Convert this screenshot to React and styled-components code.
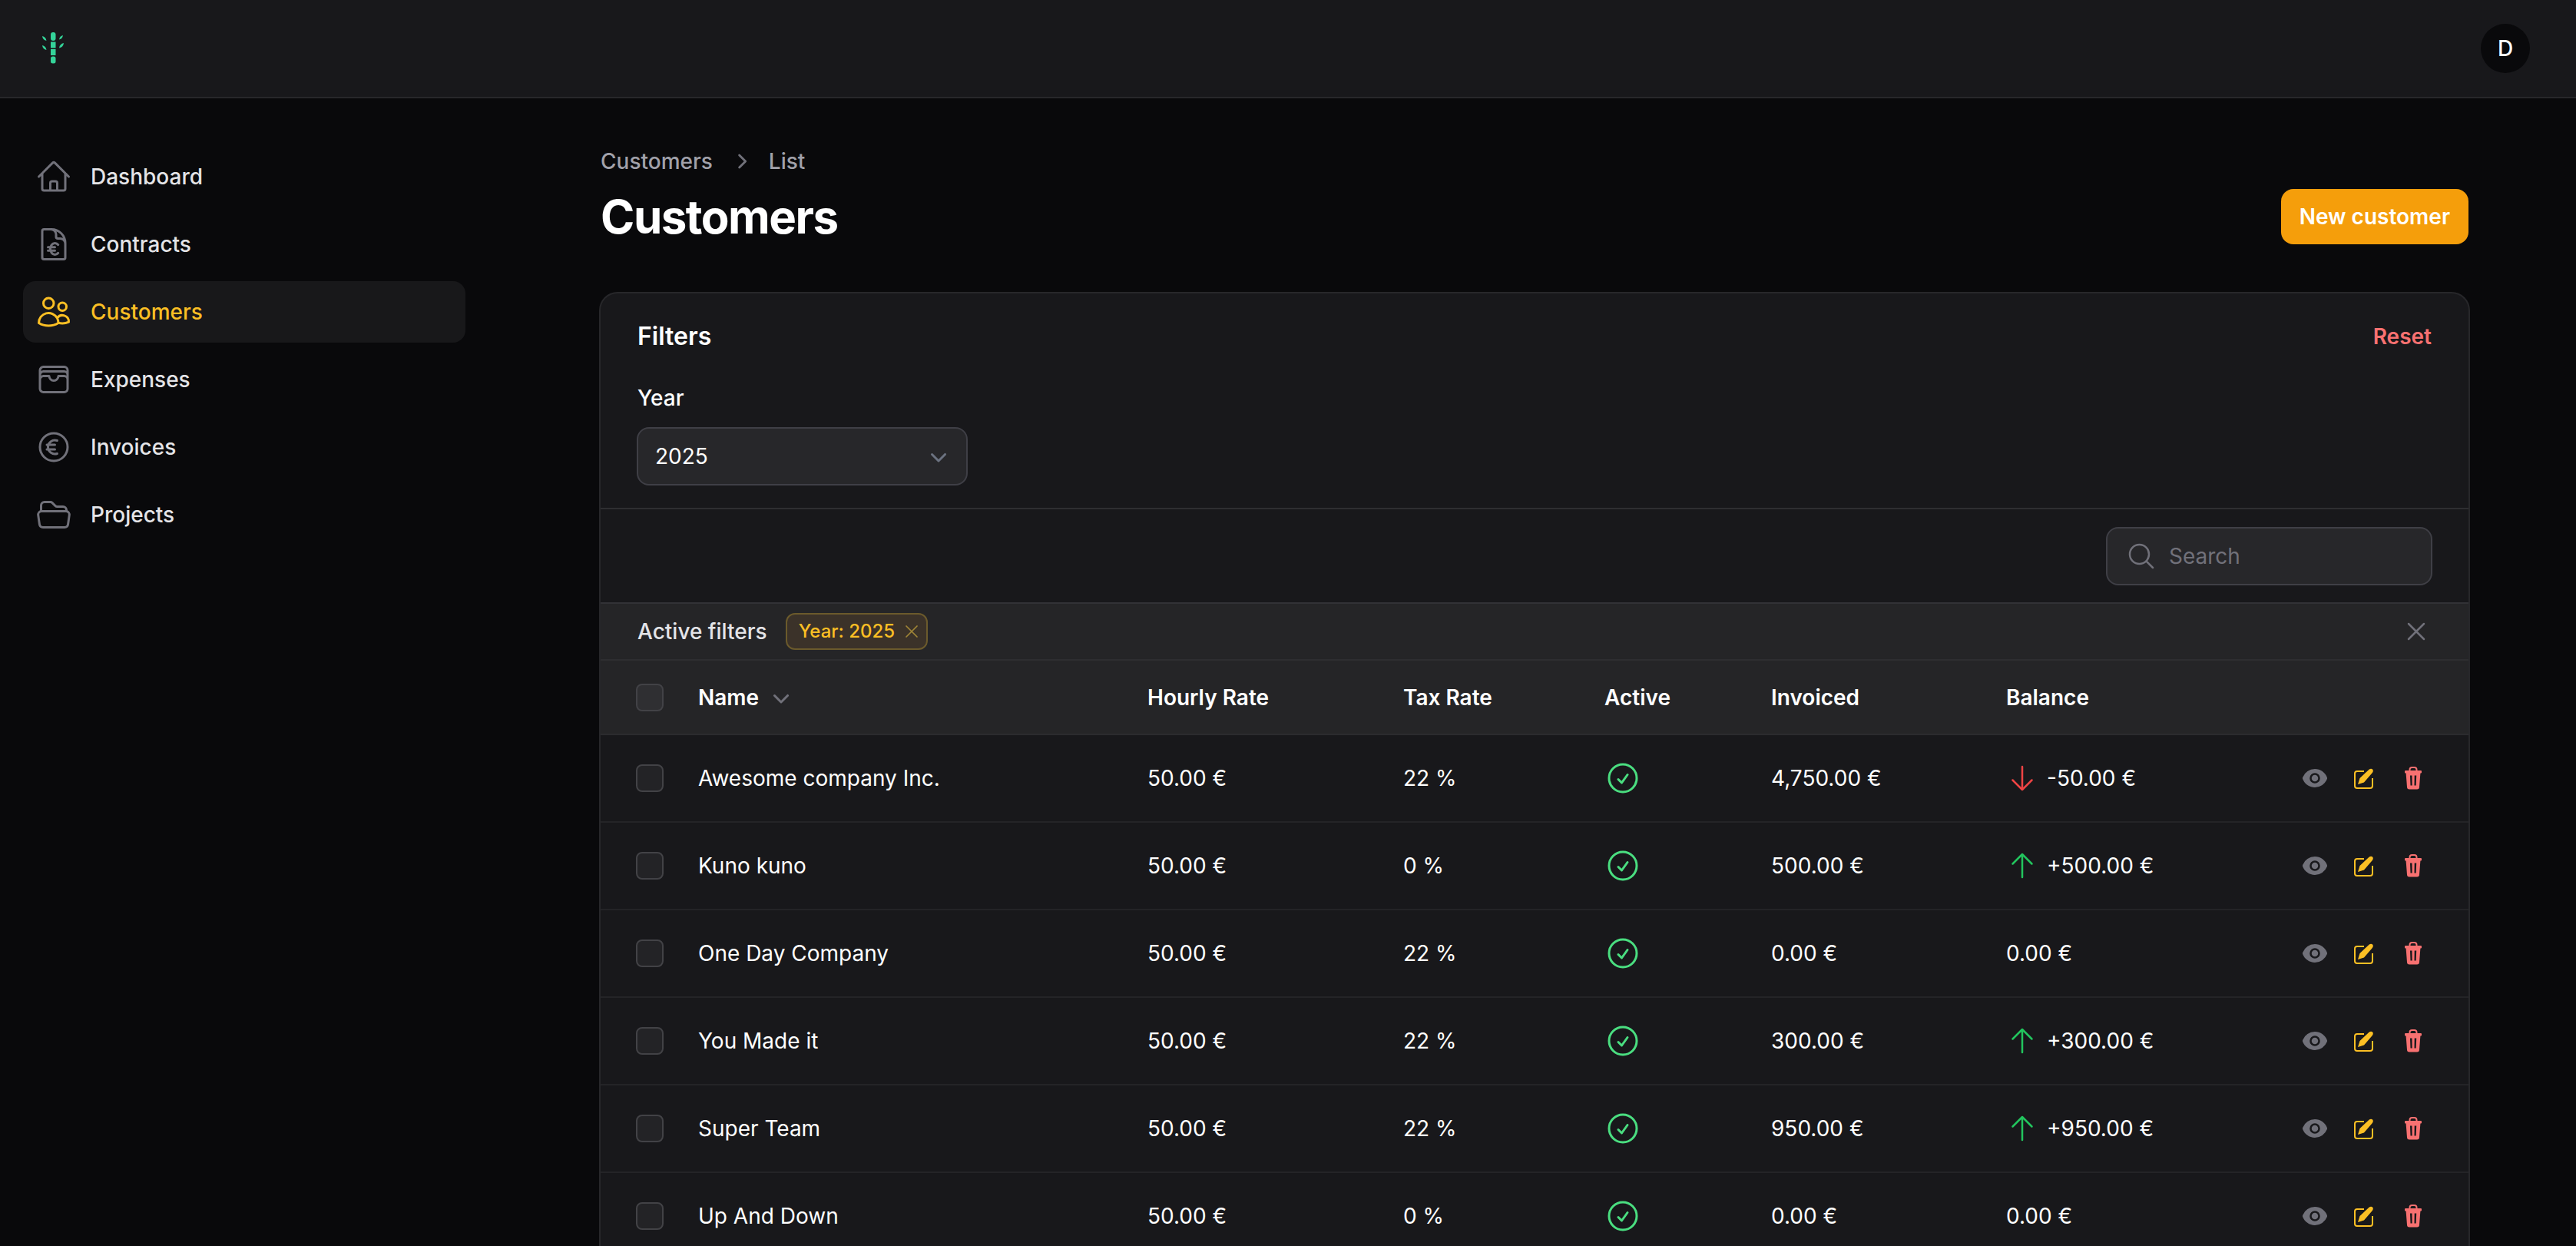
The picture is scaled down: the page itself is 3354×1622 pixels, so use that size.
import styled, { createGlobalStyle } from "styled-components";
import {
  HiOutlineHome,
  HiOutlineDocumentCurrencyEuro,
  HiOutlineUsers,
  HiOutlineWallet,
  HiOutlineCurrencyEuro,
  HiOutlineFolderOpen,
  HiOutlineMagnifyingGlass,
  HiOutlineXMark,
  HiOutlineCheckCircle,
  HiOutlineArrowUp,
  HiOutlineArrowDown,
  HiMiniChevronRight,
  HiMiniChevronDown,
  HiMiniEye,
} from "react-icons/hi2";

const navItems = [
  { label: "Dashboard", icon: HiOutlineHome },
  { label: "Contracts", icon: HiOutlineDocumentCurrencyEuro },
  { label: "Customers", icon: HiOutlineUsers, active: true },
  { label: "Expenses", icon: HiOutlineWallet },
  { label: "Invoices", icon: HiOutlineCurrencyEuro },
  { label: "Projects", icon: HiOutlineFolderOpen },
];

const customers = [
  { name: "Awesome company Inc.", tax: "22 %", invoiced: "4,750.00 €", balance: "-50.00 €", trend: "down" },
  { name: "Kuno kuno", tax: "0 %", invoiced: "500.00 €", balance: "+500.00 €", trend: "up" },
  { name: "One Day Company", tax: "22 %", invoiced: "0.00 €", balance: "0.00 €" },
  { name: "You Made it", tax: "22 %", invoiced: "300.00 €", balance: "+300.00 €", trend: "up" },
  { name: "Super Team", tax: "22 %", invoiced: "950.00 €", balance: "+950.00 €", trend: "up" },
  { name: "Up And Down", tax: "0 %", invoiced: "0.00 €", balance: "0.00 €" },
];

export default function App() {
  return (
    <>
      <GlobalStyle />
      <Page>
        <TopBar>
          <Logo />
          <Avatar>D</Avatar>
        </TopBar>
        <Body>
          <Sidebar>
            {navItems.map((item) => (
              <NavItem key={item.label} $active={item.active}>
                <item.icon />
                {item.label}
              </NavItem>
            ))}
          </Sidebar>
          <Main>
            <Crumbs>
              <span>Customers</span>
              <HiMiniChevronRight />
              <span>List</span>
            </Crumbs>
            <TitleRow>
              <Title>Customers</Title>
              <PrimaryButton>New customer</PrimaryButton>
            </TitleRow>
            <Card>
              <Filters>
                <FiltersHead>
                  <FiltersTitle>Filters</FiltersTitle>
                  <ResetLink>Reset</ResetLink>
                </FiltersHead>
                <FieldLabel>Year</FieldLabel>
                <Select>
                  2025
                  <HiMiniChevronDown />
                </Select>
              </Filters>
              <SearchRow>
                <SearchBox>
                  <HiOutlineMagnifyingGlass />
                  Search
                </SearchBox>
              </SearchRow>
              <ActiveFilters>
                <ActiveLabel>Active filters</ActiveLabel>
                <Chip>
                  Year: 2025
                  <HiOutlineXMark />
                </Chip>
                <ClearAll>
                  <HiOutlineXMark />
                </ClearAll>
              </ActiveFilters>
              <HeadRow>
                <Checkbox $head />
                <SortHead>
                  Name
                  <HiMiniChevronDown />
                </SortHead>
                <span>Hourly Rate</span>
                <span>Tax Rate</span>
                <span>Active</span>
                <span>Invoiced</span>
                <span>Balance</span>
              </HeadRow>
              {customers.map((c) => (
                <CustomerRow key={c.name} customer={c} />
              ))}
            </Card>
          </Main>
        </Body>
      </Page>
    </>
  );
}

function CustomerRow({ customer }) {
  return (
    <Row>
      <Checkbox />
      <span>{customer.name}</span>
      <span>50.00 €</span>
      <span>{customer.tax}</span>
      <ActiveIcon>
        <HiOutlineCheckCircle />
      </ActiveIcon>
      <span>{customer.invoiced}</span>
      <Balance>
        {customer.trend === "down" && <HiOutlineArrowDown color="#ef4444" />}
        {customer.trend === "up" && <HiOutlineArrowUp color="#22c55e" />}
        {customer.balance}
      </Balance>
      <Actions>
        <HiMiniEye color="#71717a" />
        <EditIcon />
        <TrashIcon />
      </Actions>
    </Row>
  );
}

function Logo() {
  return (
    <LogoSvg viewBox="0 0 40 48" fill="#34d399">
      <rect x="17" y="3" width="6.5" height="11" rx="3" />
      <rect x="17" y="15.500" width="6.500" height="8" />
      <rect x="17" y="25" width="6.500" height="8" />
      <rect x="17" y="34.500" width="6.500" height="9" rx="2.500" />
      <path d="M6 8c3 .5 5 2.500 5.500 6-3.500-.5-5-3-5.500-6z" />
      <path d="M33 7c-3 .5-4.500 2.500-5 5.500 3-.5 4.500-2.500 5-5.500z" />
      <path d="M6 20c3 .5 5 2.500 5.500 6-3.500-.5-5-3-5.500-6z" />
      <path d="M34 17c-3.500.5-5.500 3-6 6.500 3.500-.5 5.500-3 6-6.500z" />
    </LogoSvg>
  );
}

function EditIcon() {
  return (
    <svg viewBox="-4 -4 34 34" fill="none">
      <path
        d="M13 4H4a3 3 0 0 0-3 3v16a3 3 0 0 0 3 3h17a3 3 0 0 0 3-3V13"
        stroke="#fbbf24"
        strokeWidth="2"
      />
      <path
        d="M5 21 7.500 13 19.500 1.800c1.500-1.500 3.600-1.500 4.600-.3 1 1.100 1 3-.3 4.600L13 18.500z"
        fill="#fbbf24"
      />
    </svg>
  );
}

function TrashIcon() {
  return (
    <svg viewBox="0 0 34 34" fill="none">
      <path
        d="M12.500 8V6a3 3 0 0 1 3-3h3a3 3 0 0 1 3 3v2"
        stroke="#f87171"
        strokeWidth="2"
      />
      <path
        fillRule="evenodd"
        clipRule="evenodd"
        d="M7 7h20a1 1 0 0 1 1 1v1.500a1 1 0 0 1-1 1h-.600L25 28.500a3 3 0 0 1-3 3H12a3 3 0 0 1-3-3L7.600 10.500H7a1 1 0 0 1-1-1V8a1 1 0 0 1 1-1zM13 13.500l.5 13h2.200l-.2-13zM18.700 13.500l-.2 13h2.200l.5-13z"
        fill="#f87171"
      />
    </svg>
  );
}

const GlobalStyle = createGlobalStyle`
  html, body {
    margin: 0;
    background: #09090b;
  }
  * {
    box-sizing: border-box;
  }
  body {
    font-family: Inter, "Liberation Sans", sans-serif;
    font-size: 28px;
    line-height: 40px;
    color: #fff;
    -webkit-font-smoothing: antialiased;
  }
`;

const Page = styled.div`
  height: 1622px;
  overflow: hidden;
  background: #09090b;
`;

const TopBar = styled.header`
  height: 128px;
  display: flex;
  align-items: center;
  justify-content: space-between;
  padding: 0 60px 0 49px;
  background: #18181b;
  border-bottom: 2px solid #27272a;
`;

const LogoSvg = styled.svg`
  width: 40px;
  height: 48px;
`;

const Avatar = styled.div`
  width: 64px;
  height: 64px;
  border-radius: 50%;
  background: #09090b;
  display: flex;
  align-items: center;
  justify-content: center;
  font-size: 28px;
  font-weight: 500;
`;

const Body = styled.div`
  display: flex;
`;

const Sidebar = styled.nav`
  width: 640px;
  flex-shrink: 0;
  padding: 62px 34px 0 30px;
  display: flex;
  flex-direction: column;
  gap: 8px;
`;

const NavItem = styled.a`
  height: 80px;
  display: flex;
  align-items: center;
  gap: 24px;
  padding: 0 16px;
  border-radius: 16px;
  font-weight: 500;
  color: ${(p) => (p.$active ? "#fbbf24" : "#e4e4e7")};
  background: ${(p) => (p.$active ? "#18181a" : "transparent")};

  svg {
    width: 48px;
    height: 48px;
    color: ${(p) => (p.$active ? "#fbbf24" : "#71717a")};
  }
`;

const Main = styled.main`
  flex: 1;
  min-width: 0;
  padding: 62px 138px 0 140px;
`;

const Crumbs = styled.div`
  display: flex;
  align-items: center;
  gap: 17px;
  padding-left: 2px;
  color: #a1a1aa;
  font-weight: 500;

  svg {
    width: 38px;
    height: 38px;
    margin-left: 1px;
    color: #71717a;
  }
`;

const TitleRow = styled.div`
  display: flex;
  align-items: center;
  justify-content: space-between;
  height: 72px;
  margin-top: 16px;
  padding-right: 2px;
`;

const Title = styled.h1`
  margin: 0;
  font-size: 60px;
  line-height: 72px;
  font-weight: 700;
  letter-spacing: -1.5px;
  padding-left: 2px;
`;

const PrimaryButton = styled.button`
  height: 72px;
  padding: 0 24px;
  border: 0;
  border-radius: 16px;
  background: #f59e0b;
  color: #fff;
  font: inherit;
  font-weight: 600;
`;

const Card = styled.section`
  margin-top: 62px;
  border: 2px solid #27272a;
  border-bottom: 0;
  border-radius: 24px 24px 0 0;
  background: #18181b;
  overflow: hidden;
`;

const Filters = styled.div`
  height: 281px;
  padding: 32px 48px 0 48px;
  border-bottom: 2px solid #2e2e31;
`;

const FiltersHead = styled.div`
  display: flex;
  align-items: center;
  justify-content: space-between;
  height: 48px;
`;

const FiltersTitle = styled.h2`
  margin: 0;
  font-size: 32px;
  line-height: 48px;
  font-weight: 600;
`;

const ResetLink = styled.a`
  color: #f87171;
  font-weight: 600;
`;

const FieldLabel = styled.div`
  margin-top: 36px;
  font-weight: 500;
`;

const Select = styled.div`
  width: 431px;
  height: 76px;
  margin: 18px 0 0 -1px;
  padding: 0 16px 0 22px;
  display: flex;
  align-items: center;
  justify-content: space-between;
  background: #27272a;
  border: 2px solid #3f3f46;
  border-radius: 16px;

  svg {
    width: 40px;
    height: 40px;
    color: #6b7280;
  }
`;

const SearchRow = styled.div`
  height: 123px;
  padding: 23px 47px 0 0;
  display: flex;
  justify-content: flex-end;
  border-bottom: 2px solid #323236;
  background: #18181b;
`;

const SearchBox = styled.div`
  width: 425px;
  height: 76px;
  display: flex;
  align-items: center;
  gap: 16px;
  padding: 0 24px;
  background: #27272a;
  border: 2px solid #3f3f46;
  border-radius: 16px;
  color: #71717a;

  svg {
    width: 40px;
    height: 40px;
  }
`;

const ActiveFilters = styled.div`
  height: 74px;
  display: flex;
  align-items: center;
  gap: 24px;
  padding: 0 48px 0 48px;
  background: #252527;
  border-bottom: 2px solid #2e2e31;
`;

const ActiveLabel = styled.span`
  font-weight: 500;
  color: #e4e4e7;
`;

const Chip = styled.span`
  height: 48px;
  display: inline-flex;
  align-items: center;
  gap: 8px;
  padding: 0 5px 0 15px;
  background: #3b3229;
  border: 2px solid #6b5a2c;
  border-radius: 12px;
  color: #fbbf24;
  font-size: 24px;
  line-height: 32px;
  font-weight: 500;

  svg {
    width: 28px;
    height: 28px;
    color: #a08537;
  }
`;

const ClearAll = styled.span`
  display: flex;
  margin-left: auto;

  svg {
    width: 40px;
    height: 40px;
    color: #71717a;
  }
`;

const columns = "81px 585px 333px 262px 217px 306px 1fr";

const HeadRow = styled.div`
  height: 97px;
  display: grid;
  grid-template-columns: ${columns};
  align-items: center;
  padding-left: 46px;
  background: #252527;
  border-bottom: 2px solid #2b2b2e;
  font-weight: 600;
`;

const SortHead = styled.span`
  display: flex;
  align-items: center;
  gap: 9px;

  svg {
    width: 40px;
    height: 40px;
    color: #71717a;
  }
`;

const Row = styled.div`
  height: 114px;
  display: grid;
  grid-template-columns: ${columns} auto;
  align-items: center;
  padding-left: 46px;
  border-bottom: 2px solid #242427;
  font-weight: 400;
`;

const Checkbox = styled.span`
  width: 36px;
  height: 36px;
  border-radius: 8px;
  background: ${(p) => (p.$head ? "#2f2f32" : "#232326")};
  border: 2px solid #424246;
`;

const ActiveIcon = styled.span`
  display: flex;

  svg {
    width: 48px;
    height: 48px;
    color: #4ade80;
  }
`;

const Balance = styled.span`
  display: flex;
  align-items: center;
  gap: 12px;

  svg {
    width: 40px;
    height: 40px;
    margin-left: 1px;
  }
`;

const Actions = styled.span`
  display: flex;
  align-items: center;
  gap: 30px;
  padding-right: 55px;

  svg {
    width: 34px;
    height: 34px;
  }
`;
